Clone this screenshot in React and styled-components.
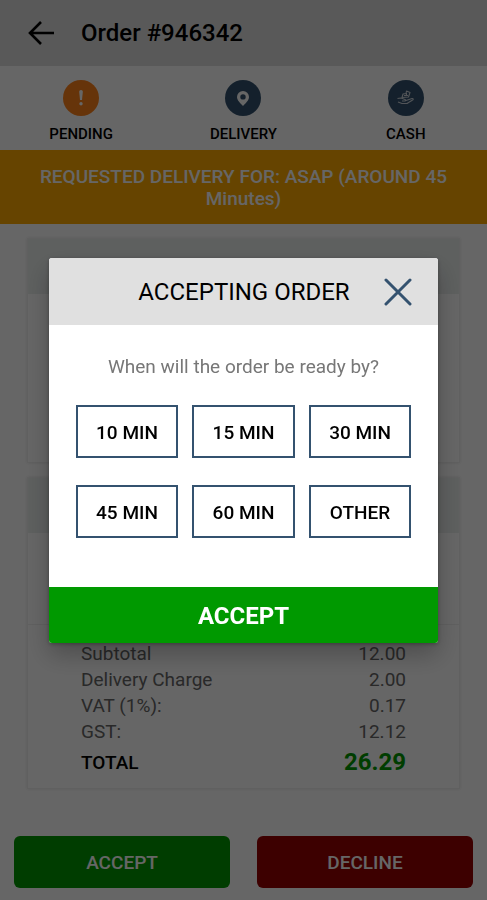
import React, { useState } from 'react'
import styled, { createGlobalStyle } from 'styled-components'

const GlobalStyle = createGlobalStyle`
  * {
    box-sizing: border-box;
  }

  body {
    margin: 0;
    background: #fff;
    color: #000;
    font-family: Roboto, "Liberation Sans", sans-serif;
    font-size: 19px;
  }

  button {
    border: 0;
    padding: 0;
    background: none;
    color: inherit;
    font: inherit;
    cursor: pointer;
  }
`

const Page = styled.div`
  display: flex;
  flex-direction: column;
  min-height: 100vh;
`

const Header = styled.header`
  display: flex;
  align-items: center;
  gap: 27px;
  height: 66px;
  padding: 0 28px;
  background: #dedede;

  h1 {
    margin: 0;
    font-size: 24px;
    font-weight: 500;
  }
`

const IconButton = styled.button`
  display: flex;
`

const StatusBar = styled.ul`
  display: grid;
  grid-template-columns: repeat(3, 1fr);
  margin: 0;
  padding: 14px 0 6px;
  list-style: none;
`

const Status = styled.li`
  display: flex;
  flex-direction: column;
  align-items: center;
  gap: 8px;
  font-size: 15px;
  line-height: 20px;
  font-weight: 500;
`

const StatusIcon = styled.span`
  display: flex;
  align-items: center;
  justify-content: center;
  width: 36px;
  height: 36px;
  border-radius: 50%;
  background: ${props => props.$color};
  color: #fff;
`

const Banner = styled.div`
  padding: 16px 36px 14px;
  background: #ffaa00;
  color: #fff;
  font-size: 19px;
  line-height: 22px;
  font-weight: 500;
  text-align: center;
`

const Cards = styled.main`
  display: flex;
  flex-direction: column;
  gap: 14px;
  padding: 14px 27px 32px;
`

const Card = styled.section`
  border: 1px solid #f0f0f0;
  box-shadow: 0 0 3px #e4e4e4;
`

const CardHeader = styled.div`
  height: 55px;
  background: #ebefee;
`

const CardBody = styled.div`
  min-height: ${props => props.$minHeight}px;
`

const Totals = styled.table`
  width: 100%;
  border-top: 1px solid #f0f0f0;
  border-spacing: 0;
  padding: 16px 53px 8px;
  color: #666;
  line-height: 26px;

  th {
    padding: 0;
    font-weight: 400;
    text-align: left;
  }

  td {
    padding: 0;
    text-align: right;
  }
`

const TotalRow = styled.tr`
  line-height: 35px;

  th {
    color: #000;
    font-weight: 500;
  }

  td {
    color: #009900;
    font-size: 24px;
    font-weight: 700;
  }
`

const Actions = styled.footer`
  display: grid;
  grid-template-columns: 1fr 1fr;
  gap: 27px;
  margin-top: auto;
  padding: 14px 14px 12px;
`

const ActionButton = styled.button`
  height: 52px;
  border-radius: 6px;
  background: ${props => props.$color};
  color: #fff;
  font-weight: 500;
`

const Overlay = styled.div`
  position: fixed;
  inset: 0;
  display: flex;
  align-items: center;
  justify-content: center;
  background: rgba(0, 0, 0, .6);
`

const Modal = styled.div`
  width: 80%;
  overflow: hidden;
  border-radius: 3px;
  background: #fff;
  box-shadow: 0 12px 24px rgba(0, 0, 0, .25), 0 1px 4px rgba(0, 0, 0, .3);
`

const ModalHeader = styled.div`
  display: grid;
  grid-template-columns: 28px 1fr 28px;
  align-items: center;
  height: 67px;
  padding: 1px 26px 0 27px;
  background: #e0e0e0;

  h2 {
    grid-column: 2;
    margin: 0;
    font-size: 24px;
    font-weight: 400;
    text-align: center;
  }
`

const ModalBody = styled.div`
  padding: 31px 27px 49px;

  p {
    margin: 0 0 27px;
    color: #777;
    line-height: 22px;
    text-align: center;
  }
`

const TimeGrid = styled.div`
  display: grid;
  grid-template-columns: repeat(3, 1fr);
  gap: 27px 14px;
`

const TimeButton = styled.button`
  height: 53px;
  border: 2px solid #34526f;
  background: #fff;
  padding-top: 2px;
  font-weight: 500;
`

const ModalAccept = styled.button`
  width: 100%;
  height: 56px;
  padding-top: 2px;
  background: #009900;
  color: #fff;
  font-size: 24px;
  font-weight: 700;
`

const charges = [
  { label: 'Subtotal', value: '12.00' },
  { label: 'Delivery Charge', value: '2.00' },
  { label: 'VAT (1%):', value: '0.17' },
  { label: 'GST:', value: '12.12' }
]

const times = ['10 MIN', '15 MIN', '30 MIN', '45 MIN', '60 MIN', 'OTHER']

const BackIcon = () => (
  <svg width="26" height="26" viewBox="0 0 26 26" fill="none" stroke="#000" strokeWidth="2.6">
    <path d="M13 2 2 13l11 11M2 13h24" />
  </svg>
)

const CloseIcon = () => (
  <svg width="28" height="28" viewBox="0 0 28 28" fill="none" stroke="#34526f" strokeWidth="3" strokeLinecap="round">
    <path d="M2 2l24 24M26 2 2 26" />
  </svg>
)

const PendingIcon = () => (
  <svg width="6" height="16" viewBox="0 0 6 16" fill="currentColor">
    <path d="M3 0c1.200 0 1.900.8 1.800 1.900L4 10H2L1.200 1.900C1.100.8 1.800 0 3 0z" />
    <circle cx="3" cy="13.800" r="1.700" />
  </svg>
)

const PinIcon = () => (
  <svg width="12" height="15" viewBox="0 0 12 15" fill="currentColor" fillRule="evenodd">
    <path d="M6 0a6 6 0 0 1 6 6c0 3.600-3.600 6.400-6 9-2.400-2.600-6-5.400-6-9a6 6 0 0 1 6-6zm0 3.200a2.700 2.700 0 1 0 0 5.400 2.700 2.700 0 0 0 0-5.400z" />
  </svg>
)

const CashIcon = () => (
  <svg width="17" height="16" viewBox="0 0 17 16" fill="none" stroke="currentColor" strokeWidth="1.100" strokeLinejoin="round" opacity=".75">
    <path d="M9.500 1 13 2.500 11.500 7 5 7.500 6 4l3-.5zM7 5.500h4M9.500 3v3" />
    <path d="M.5 8.500 4 8l4 1.500c1 .5.500 1.500-.5 1.500H5M9 10.500l6-2c1.300-.3 1.600 1 .6 1.500L10 13.500H5l-4-1.500" />
  </svg>
)

const AcceptModal = ({ onClose }) => (
  <Overlay>
    <Modal role="dialog" aria-labelledby="accept-title">
      <ModalHeader>
        <h2 id="accept-title">ACCEPTING ORDER</h2>
        <IconButton aria-label="Close" onClick={onClose}><CloseIcon /></IconButton>
      </ModalHeader>
      <ModalBody>
        <p>When will the order be ready by?</p>
        <TimeGrid>
          {times.map(time => <TimeButton key={time}>{time}</TimeButton>)}
        </TimeGrid>
      </ModalBody>
      <ModalAccept onClick={onClose}>ACCEPT</ModalAccept>
    </Modal>
  </Overlay>
)

const App = () => {
  const [accepting, setAccepting] = useState(true)

  return (
    <Page>
      <GlobalStyle />
      <Header>
        <IconButton aria-label="Back"><BackIcon /></IconButton>
        <h1>Order #946342</h1>
      </Header>
      <StatusBar>
        <Status>
          <StatusIcon $color="#ff8219"><PendingIcon /></StatusIcon>
          PENDING
        </Status>
        <Status>
          <StatusIcon $color="#34526f"><PinIcon /></StatusIcon>
          DELIVERY
        </Status>
        <Status>
          <StatusIcon $color="#34526f"><CashIcon /></StatusIcon>
          CASH
        </Status>
      </StatusBar>
      <Banner>REQUESTED DELIVERY FOR: ASAP (AROUND 45 Minutes)</Banner>

      <Cards>
        <Card>
          <CardHeader />
          <CardBody $minHeight={168} />
        </Card>
        <Card>
          <CardHeader />
          <CardBody $minHeight={91} />
          <Totals>
            <tbody>
              {charges.map(({ label, value }) => (
                <tr key={label}>
                  <th scope="row">{label}</th>
                  <td>{value}</td>
                </tr>
              ))}
              <TotalRow>
                <th scope="row">TOTAL</th>
                <td>26.29</td>
              </TotalRow>
            </tbody>
          </Totals>
        </Card>
      </Cards>

      <Actions>
        <ActionButton $color="#009900" onClick={() => setAccepting(true)}>ACCEPT</ActionButton>
        <ActionButton $color="#990000">DECLINE</ActionButton>
      </Actions>

      {accepting && <AcceptModal onClose={() => setAccepting(false)} />}
    </Page>
  )
}

export default App
